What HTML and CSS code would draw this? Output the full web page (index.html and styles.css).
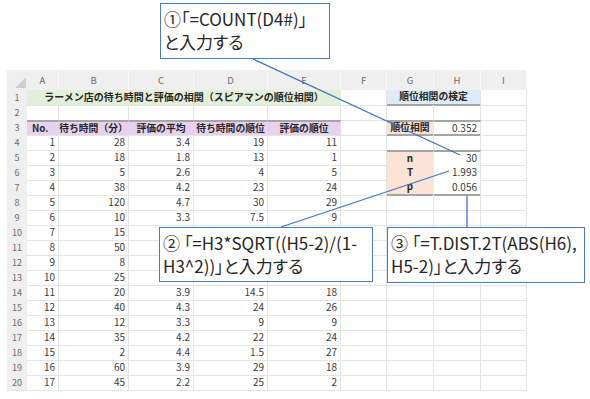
FILE: index.html
```html
<!DOCTYPE html>
<html lang="ja">
<head>
<meta charset="utf-8">
<link rel="stylesheet" href="styles.css">
</head>
<body>
<div class="page">
  <div class="sheet">
    <div class="r hdr"><div class="n corner"><span class="tri"></span></div><div class="h">A</div><div class="h">B</div><div class="h">C</div><div class="h">D</div><div class="h">E</div><div class="h">F</div><div class="h">G</div><div class="h">H</div><div class="h">I</div></div>
    <div class="r"><div class="n">1</div><div class="c title span5">ラーメン店の待ち時間と評価の相関（スピアマンの順位相関）</div><div class="c"></div><div class="c blue span2">順位相関の検定</div><div class="c"></div></div>
    <div class="r"><div class="n">2</div><div class="c"></div><div class="c"></div><div class="c"></div><div class="c"></div><div class="c"></div><div class="c"></div><div class="c"></div><div class="c"></div><div class="c"></div></div>
    <div class="r"><div class="n">3</div><div class="c th left">No.</div><div class="c th">待ち時間（分）</div><div class="c th">評価の平均</div><div class="c th">待ち時間の順位</div><div class="c th">評価の順位</div><div class="c"></div><div class="c lab boxt">順位相関</div><div class="c boxt">0.352</div><div class="c"></div></div>
    <div class="r"><div class="n">4</div><div class="c">1</div><div class="c">28</div><div class="c">3.4</div><div class="c">19</div><div class="c">11</div><div class="c"></div><div class="c"></div><div class="c"></div><div class="c"></div></div>
    <div class="r"><div class="n">5</div><div class="c">2</div><div class="c">18</div><div class="c">1.8</div><div class="c">13</div><div class="c">1</div><div class="c"></div><div class="c lab top2">n</div><div class="c top2">30</div><div class="c"></div></div>
    <div class="r"><div class="n">6</div><div class="c">3</div><div class="c">5</div><div class="c">2.6</div><div class="c">4</div><div class="c">5</div><div class="c"></div><div class="c lab mid">T</div><div class="c mid">1.993</div><div class="c"></div></div>
    <div class="r"><div class="n">7</div><div class="c">4</div><div class="c">38</div><div class="c">4.2</div><div class="c">23</div><div class="c">24</div><div class="c"></div><div class="c lab bot2">p</div><div class="c bot2">0.056</div><div class="c"></div></div>
    <div class="r"><div class="n">8</div><div class="c">5</div><div class="c">120</div><div class="c">4.7</div><div class="c">30</div><div class="c">29</div><div class="c"></div><div class="c"></div><div class="c"></div><div class="c"></div></div>
    <div class="r"><div class="n">9</div><div class="c">6</div><div class="c">10</div><div class="c">3.3</div><div class="c">7.5</div><div class="c">9</div><div class="c"></div><div class="c"></div><div class="c"></div><div class="c"></div></div>
    <div class="r"><div class="n">10</div><div class="c">7</div><div class="c">15</div><div class="c"></div><div class="c"></div><div class="c"></div><div class="c"></div><div class="c"></div><div class="c"></div><div class="c"></div></div>
    <div class="r"><div class="n">11</div><div class="c">8</div><div class="c">50</div><div class="c"></div><div class="c"></div><div class="c"></div><div class="c"></div><div class="c"></div><div class="c"></div><div class="c"></div></div>
    <div class="r"><div class="n">12</div><div class="c">9</div><div class="c">8</div><div class="c"></div><div class="c"></div><div class="c"></div><div class="c"></div><div class="c"></div><div class="c"></div><div class="c"></div></div>
    <div class="r"><div class="n">13</div><div class="c">10</div><div class="c">25</div><div class="c"></div><div class="c"></div><div class="c"></div><div class="c"></div><div class="c"></div><div class="c"></div><div class="c"></div></div>
    <div class="r"><div class="n">14</div><div class="c">11</div><div class="c">20</div><div class="c">3.9</div><div class="c">14.5</div><div class="c">18</div><div class="c"></div><div class="c"></div><div class="c"></div><div class="c"></div></div>
    <div class="r"><div class="n">15</div><div class="c">12</div><div class="c">40</div><div class="c">4.3</div><div class="c">24</div><div class="c">26</div><div class="c"></div><div class="c"></div><div class="c"></div><div class="c"></div></div>
    <div class="r"><div class="n">16</div><div class="c">13</div><div class="c">12</div><div class="c">3.3</div><div class="c">9</div><div class="c">9</div><div class="c"></div><div class="c"></div><div class="c"></div><div class="c"></div></div>
    <div class="r"><div class="n">17</div><div class="c">14</div><div class="c">35</div><div class="c">4.2</div><div class="c">22</div><div class="c">24</div><div class="c"></div><div class="c"></div><div class="c"></div><div class="c"></div></div>
    <div class="r"><div class="n">18</div><div class="c">15</div><div class="c">2</div><div class="c">4.4</div><div class="c">1.5</div><div class="c">27</div><div class="c"></div><div class="c"></div><div class="c"></div><div class="c"></div></div>
    <div class="r"><div class="n">19</div><div class="c">16</div><div class="c">60</div><div class="c">3.9</div><div class="c">29</div><div class="c">18</div><div class="c"></div><div class="c"></div><div class="c"></div><div class="c"></div></div>
    <div class="r"><div class="n">20</div><div class="c">17</div><div class="c">45</div><div class="c">2.2</div><div class="c">25</div><div class="c">2</div><div class="c"></div><div class="c"></div><div class="c"></div><div class="c"></div></div>
  </div>

  <svg class="connectors" width="590" height="399" viewBox="0 0 590 399">
    <line x1="253" y1="59" x2="460" y2="155"/>
    <line x1="281" y1="227" x2="449" y2="171"/>
    <line x1="467" y1="196" x2="467" y2="227"/>
  </svg>

  <div class="callout c1">①「=COUNT(D4#)」<br>と入力する</div>
  <div class="callout c2">② 「=H3*SQRT((H5-2)/(1-<br>H3^2))」と入力する</div>
  <div class="callout c3">③ 「=T.DIST.2T(ABS(H6),<br>H5-2)」と入力する</div>
</div>
</body>
</html>
```

FILE: styles.css
```css
html, body {
  margin: 0;
  padding: 0;
  background: #ffffff;
}

.page {
  position: relative;
  width: 590px;
  height: 399px;
  overflow: hidden;
  box-sizing: border-box;
  padding: 70px 0 0 7px;
  font-family: "Noto Sans CJK JP", "Noto Sans", sans-serif;
}

.sheet {
  display: flex;
  flex-direction: column;
  width: 520px;
}

.r {
  display: grid;
  grid-template-columns: 20px 32px 70px 65px 74px 73px 46px 47px 47px 46px;
  height: 15px;
}

.r.hdr {
  height: 20px;
  background: #efefef;
}

.n {
  background: #efefef;
  color: #6b6b6b;
  font-size: 9px;
  line-height: 15px;
  text-align: center;
  border-bottom: 1px solid #e2e2e2;
}

.corner {
  position: relative;
  border-bottom: none;
}

.tri {
  position: absolute;
  right: 1px;
  bottom: 2px;
  width: 0;
  height: 0;
  border-left: 11px solid transparent;
  border-bottom: 11px solid #cfcfcf;
}

.h {
  color: #6b6b6b;
  font-size: 9.5px;
  line-height: 20px;
  text-align: center;
  border-right: 1px solid #f8f8f8;
}

.c {
  box-sizing: border-box;
  border-right: 1px solid #e4e4e4;
  border-bottom: 1px solid #e4e4e4;
  font-size: 10px;
  line-height: 14px;
  color: #3a3a3a;
  text-align: right;
  padding: 0 3px;
  white-space: nowrap;
  overflow: hidden;
}

.span5 { grid-column: span 5; }
.span2 { grid-column: span 2; }

.title {
  background: #e2efda;
  font-weight: bold;
  text-align: center;
  font-size: 10px;
  color: #262626;
  border-right: none;
}

.blue {
  background: #ddebf7;
  font-weight: bold;
  text-align: center;
  font-size: 9.8px;
  color: #262626;
  border-bottom: 2px solid #a5a5a5;
  line-height: 13px;
}

.th {
  background: #e7d2ed;
  font-weight: bold;
  text-align: center;
  font-size: 9.8px;
  color: #262626;
  border-top: 2px solid #a5a5a5;
  border-right-color: #e7d2ed;
  line-height: 12px;
  padding: 0;
  overflow: visible;
}

.th.left {
  text-align: left;
  padding-left: 5px;
}

.lab {
  background: #fbe3d6;
  font-weight: bold;
  text-align: center;
  color: #262626;
  font-size: 9.8px;
  border-right-color: #fbe3d6;
}

.boxt {
  border-top: 2px solid #a5a5a5;
  border-bottom: 2px solid #a5a5a5;
  line-height: 11px;
}

.top2 {
  border-top: 2px solid #a5a5a5;
  border-bottom-color: transparent;
  line-height: 12px;
}

.lab.top2, .lab.mid { border-bottom-color: #fbe3d6; }
.mid { border-bottom-color: transparent; }

.bot2 {
  border-bottom: 2px solid #a5a5a5;
  line-height: 13px;
}

.connectors {
  position: absolute;
  left: 0;
  top: 0;
}

.connectors line {
  stroke: #3d76c0;
  stroke-width: 1.3;
}

.callout {
  position: absolute;
  box-sizing: border-box;
  background: #ffffff;
  border: 1.5px solid #4a7bbb;
  color: #262626;
  font-size: 17px;
  line-height: 23px;
  padding: 3px 3px;
  white-space: nowrap;
  font-feature-settings: "palt";
}

.c1 { left: 160px; top: 3px; width: 170px; height: 56px; }
.c2 { left: 159px; top: 227px; width: 214px; height: 55px; }
.c3 { left: 387px; top: 227px; width: 198px; height: 56px; }
```
